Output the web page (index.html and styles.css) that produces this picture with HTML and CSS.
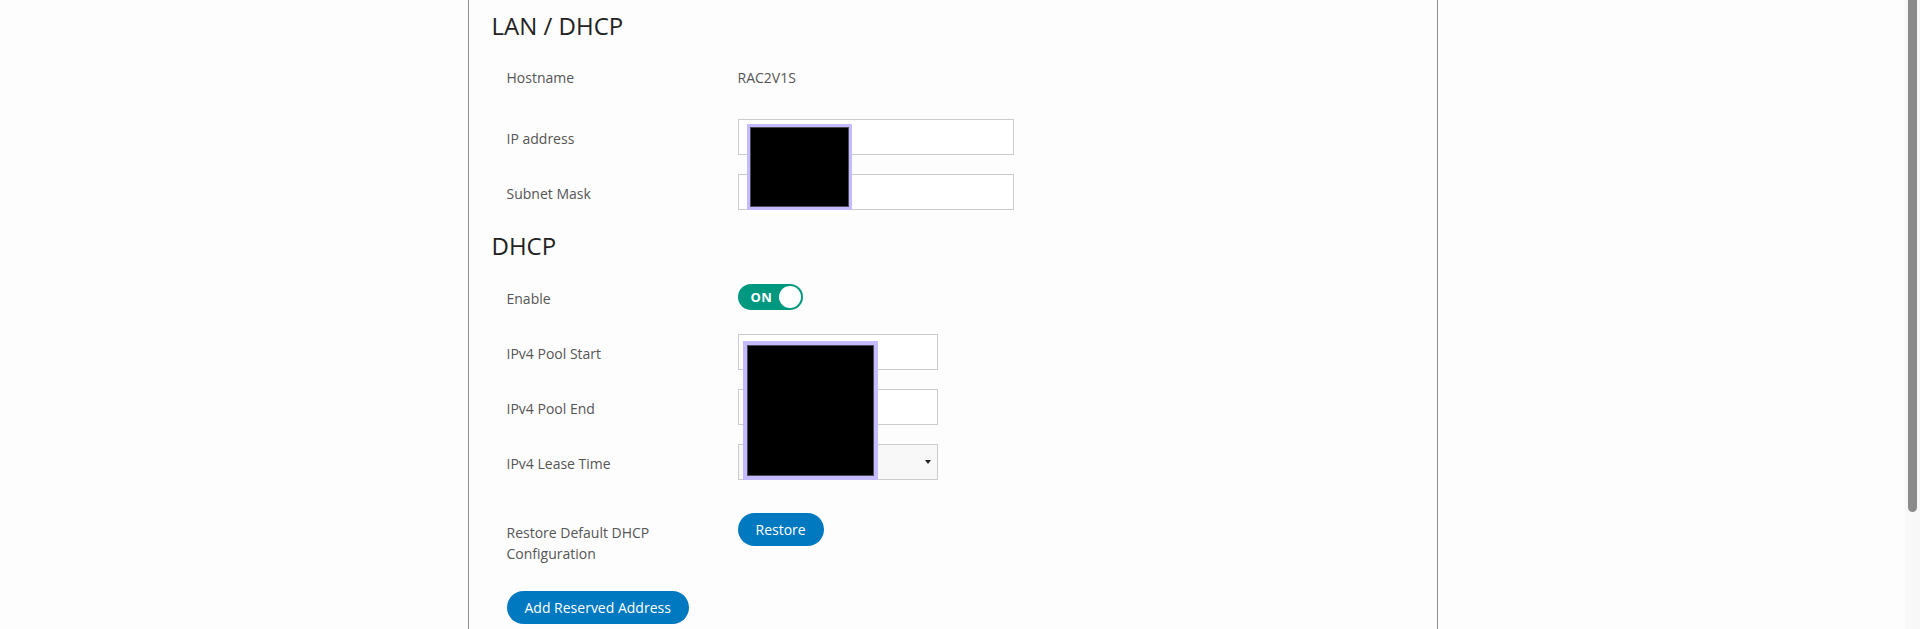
FILE: index.html
```html
<!DOCTYPE html>
<html lang="en">
<head>
<meta charset="utf-8">
<title>LAN / DHCP</title>
<link rel="stylesheet" href="styles.css">
</head>
<body>
<div class="page">
  <main class="panel">
    <h2 class="section-title title-lan">LAN / DHCP</h2>

    <div class="row row-text">
      <div class="label label-text">Hostname</div>
      <div class="value value-text">RAC2V1S</div>
    </div>

    <div class="row">
      <label class="label" for="ip">IP address</label>
      <div class="value">
        <input id="ip" class="input input-wide" type="text">
        <div class="redact redact-lan"></div>
      </div>
    </div>

    <div class="row">
      <label class="label" for="mask">Subnet Mask</label>
      <div class="value"><input id="mask" class="input input-wide" type="text"></div>
    </div>

    <h2 class="section-title title-dhcp">DHCP</h2>

    <div class="row">
      <div class="label">Enable</div>
      <div class="value">
        <div class="toggle"><span class="toggle-text">ON</span><span class="toggle-knob"></span></div>
      </div>
    </div>

    <div class="row">
      <label class="label" for="pstart">IPv4 Pool Start</label>
      <div class="value">
        <input id="pstart" class="input input-narrow" type="text">
        <div class="redact redact-dhcp"></div>
      </div>
    </div>

    <div class="row">
      <label class="label" for="pend">IPv4 Pool End</label>
      <div class="value"><input id="pend" class="input input-narrow" type="text"></div>
    </div>

    <div class="row row-lease">
      <label class="label" for="lease">IPv4 Lease Time</label>
      <div class="value">
        <div class="select-wrap"><select id="lease" class="select"><option></option></select></div>
      </div>
    </div>

    <div class="row row-top">
      <div class="label label-multi">Restore Default DHCP Configuration</div>
      <div class="value"><button class="btn" type="button">Restore</button></div>
    </div>

    <div class="row row-action">
      <button class="btn" type="button">Add Reserved Address</button>
    </div>
  </main>
</div>
<div class="scrollbar"><div class="scrollbar-thumb"></div></div>
</body>
</html>
```

FILE: styles.css
```css
body {
  margin: 0;
  background: #fdfdfd;
  font-family: "Open Sans", "Liberation Sans", sans-serif;
  color: #555;
}

.page {
  margin-right: 15px;
}

.scrollbar {
  position: fixed;
  top: 0;
  right: 0;
  width: 15px;
  height: 100%;
  background: #f8f8f8;
  z-index: 10;
}

.scrollbar-thumb {
  width: 9px;
  height: 512px;
  margin-left: 3px;
  border-radius: 0 0 5px 5px;
  background: #8b8b8b;
}

.panel {
  box-sizing: border-box;
  width: 970px;
  min-height: 773px;
  margin: 0 auto;
  padding: 9px 23px 40px;
  border-left: 1px solid #8e8e8e;
  border-right: 1px solid #8e8e8e;
  background: #fdfdfd;
}

.section-title {
  margin: 0;
  font-size: 24px;
  line-height: 34px;
  font-weight: 400;
  color: #222;
}

.title-lan {
  margin-bottom: 15px;
}

.title-dhcp {
  margin-top: 5px;
  margin-bottom: 16px;
}

.row {
  display: flex;
  align-items: center;
  min-height: 36px;
  margin-bottom: 19px;
  padding-left: 15px;
}

.row-text {
  align-items: flex-start;
  min-height: 42px;
}

.row-lease {
  margin-bottom: 33px;
}

.row-top {
  align-items: flex-start;
  margin-bottom: 25px;
}

.row-action {
  margin-bottom: 0;
}

.label {
  flex: none;
  width: 231px;
  padding-top: 3px;
  font-size: 14px;
  line-height: 20px;
  color: #555;
}

.label-text {
  padding-top: 10px;
}

.label-multi {
  width: 215px;
  margin-right: 16px;
  padding-top: 9px;
  line-height: 21px;
}

.value {
  position: relative;
  display: flex;
  align-items: center;
}

.value-text {
  padding-top: 10px;
  font-size: 14px;
  line-height: 20px;
  color: #555;
}

.input {
  box-sizing: border-box;
  height: 36px;
  margin: 0;
  padding: 0 10px;
  border: 1px solid #cbcbcb;
  border-radius: 0;
  background: #fff;
  font: inherit;
  font-size: 14px;
}

.input-wide {
  width: 276px;
}

.input-narrow {
  width: 200px;
}

.select-wrap {
  position: relative;
  width: 200px;
  height: 36px;
}

.select {
  box-sizing: border-box;
  width: 200px;
  height: 36px;
  margin: 0;
  padding: 0 10px;
  border: 1px solid #cbcbcb;
  border-radius: 0;
  background: #f8f8f8;
  -webkit-appearance: none;
  appearance: none;
  font: inherit;
  font-size: 14px;
}

.select-wrap::after {
  content: "";
  position: absolute;
  right: 7px;
  top: 16px;
  border-left: 3px solid transparent;
  border-right: 3px solid transparent;
  border-top: 4px solid #222;
}

.toggle {
  box-sizing: border-box;
  display: flex;
  align-items: center;
  justify-content: space-between;
  width: 65px;
  height: 26px;
  padding: 0 2px 0 13px;
  border-radius: 13px;
  background: #00987f;
}

.toggle-text {
  font-size: 13px;
  font-weight: 700;
  letter-spacing: 0.3px;
  color: #fff;
  line-height: 1;
}

.toggle-knob {
  width: 22px;
  height: 22px;
  border-radius: 50%;
  background: #fff;
}

.btn {
  height: 33px;
  margin: 0;
  padding: 0 18px;
  border: 0;
  border-radius: 17px;
  background: #0079c1;
  color: #fff;
  font-family: "Open Sans", "Liberation Sans", sans-serif;
  font-size: 14px;
  cursor: pointer;
}

.redact {
  position: absolute;
  z-index: 2;
  box-sizing: border-box;
  background: #000;
  border: 3px solid #c3baff;
  box-shadow: inset 0 0 0 1px #4a4a55;
}

.redact-lan {
  left: 9px;
  top: 5px;
  width: 105px;
  height: 86px;
}

.redact-dhcp {
  left: 5px;
  top: 7px;
  width: 135px;
  height: 139px;
  border-width: 4px;
}
```
